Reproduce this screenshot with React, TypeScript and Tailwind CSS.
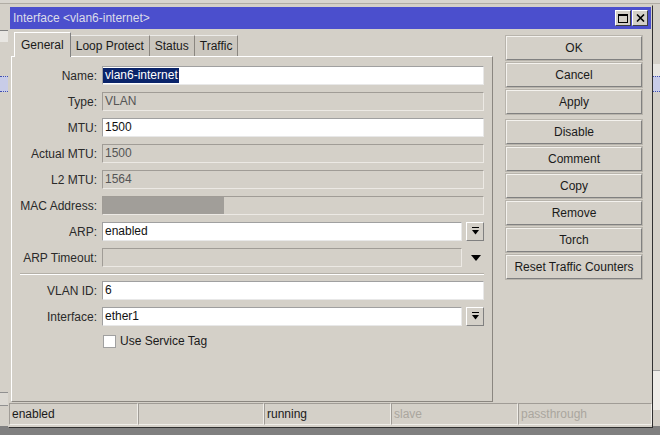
import React from 'react';

const font = { fontFamily: '"Liberation Sans", Arial, sans-serif' };

function DropButton() {
  return (
    <div className="w-[18px] h-[19px] ml-[4px] flex items-center justify-center bg-[#d4d0c8] border border-t-white border-l-white border-r-[#808080] border-b-[#808080]">
      <svg width="9" height="9" viewBox="0 0 9 9">
        <rect x="1" y="0" width="7" height="1" fill="#000" />
        <path d="M1 3h7L4.5 7.5z" fill="#000" />
      </svg>
    </div>
  );
}

function Field({
  label,
  value,
  editable,
  selected,
  drop,
  arrow,
  mac,
}: {
  label: string;
  value?: string;
  editable?: boolean;
  selected?: boolean;
  drop?: boolean;
  arrow?: boolean;
  mac?: boolean;
}) {
  return (
    <div className="flex items-center h-[19px]">
      <div className="w-[88px] text-right pr-[5px] text-[#2a2a2a] whitespace-nowrap">{label}:</div>
      <div
        className={
          'flex-1 h-[19px] flex items-center border ' +
          (editable
            ? 'bg-white border-t-[#a0a0a0] border-l-[#a0a0a0] border-r-[#e8e8e8] border-b-[#e8e8e8]'
            : 'bg-[#d4d0c8] border-t-[#a09c96] border-l-[#a09c96] border-r-[#ece9e4] border-b-[#ece9e4]')
        }
      >
        {mac ? (
          <div className="w-[121px] h-full bg-[#a19e99]" />
        ) : (
          <span
            className={
              'pl-[2px] leading-[15px] ' +
              (selected ? 'bg-[#0a246a] text-white pr-[1px]' : editable ? 'text-[#111]' : 'text-[#555]')
            }
          >
            {value}
          </span>
        )}
      </div>
      {drop && <DropButton />}
      {arrow && (
        <div className="w-[22px] flex justify-end pr-[3px]">
          <svg width="10" height="6" viewBox="0 0 10 6">
            <path d="M0 0h10L5 6z" fill="#000" />
          </svg>
        </div>
      )}
    </div>
  );
}

function Btn({ children }: { children: React.ReactNode }) {
  return (
    <div className="h-[24px] flex items-center justify-center bg-[#d4d0c8] border border-t-[#f4f2ee] border-l-[#f4f2ee] border-r-[#808080] border-b-[#808080] outline outline-1 outline-[#b8b4ac] text-[#1a1a1a]">
      {children}
    </div>
  );
}

function StatusCell({ text, dim, w }: { text?: string; dim?: boolean; w: string }) {
  return (
    <div
      className={
        w +
        ' h-[22px] flex items-center pl-[2px] border border-t-[#a09c96] border-l-[#a09c96] border-r-[#f0eee9] border-b-[#f0eee9] ' +
        (dim ? 'text-[#aaa69e]' : 'text-[#1a1a1a]')
      }
    >
      {text}
    </div>
  );
}

export default function App() {
  const tabs = ['General', 'Loop Protect', 'Status', 'Traffic'];
  return (
    <div className="relative w-[660px] h-[435px] bg-[#d4d0c8] overflow-hidden text-[12px]" style={font}>
      {/* desktop behind */}
      <div className="absolute left-0 top-0 w-[660px] h-[4px] bg-[#d8d5cf] border-b border-[#b0aca4]" />
      <div className="absolute left-0 top-[30px] w-[8px] h-[12px] border-t border-[#808080] bg-[#e8e6e2]" />
      <div className="absolute left-0 top-[76px] w-[8px] h-[16px] bg-[#c8cce8] border-y border-dotted border-[#4050b0]" />
      <div className="absolute right-0 top-[64px] w-[8px] h-[12px] bg-[#e8e6e2]" />
      <div className="absolute right-0 top-[76px] w-[8px] h-[16px] bg-[#c8cce8] border-y border-dotted border-[#4050b0]" />
      <div className="absolute right-0 top-[370px] w-[8px] h-[40px] bg-[#eeece8] border-t border-[#a0a0a0]" />
      <div className="absolute left-0 top-[392px] w-[8px] h-[14px] border-y border-[#909090] bg-[#dcd9d3]" />
      <div className="absolute left-0 top-[426px] w-[660px] h-[9px] bg-[#808080]" />

      {/* window */}
      <div className="absolute left-[8px] top-[5px] w-[645px] h-[423px] bg-[#d4d0c8] border border-t-[#d4d0c8] border-l-[#d4d0c8] border-r-[#303030] border-b-[#303030] flex flex-col">
        <div className="h-[22px] mx-[1px] mt-[1px] bg-[#4b4fcd] flex items-center justify-between pl-[3px] pr-[3px]">
          <span className="text-[#dcdcea]">Interface &lt;vlan6-internet&gt;</span>
          <div className="flex gap-[1px]">
            <div className="w-[16px] h-[16px] bg-[#d4d0c8] border border-t-white border-l-white border-r-[#404040] border-b-[#404040] flex items-center justify-center">
              <div className="w-[10px] h-[9px] border border-[#000] border-t-2" />
            </div>
            <div className="w-[16px] h-[16px] bg-[#d4d0c8] border border-t-white border-l-white border-r-[#404040] border-b-[#404040] flex items-center justify-center">
              <svg width="9" height="8" viewBox="0 0 9 8">
                <path d="M1 0.5l7 7M8 0.5l-7 7" stroke="#000" strokeWidth="1.6" />
              </svg>
            </div>
          </div>
        </div>

        <div className="flex flex-1 pl-[2px] pt-[3px]">
          {/* left: tabs + panel */}
          <div className="w-[482px] flex flex-col">
            <div className="flex items-end h-[24px] pl-[3px]">
              {tabs.map((t, i) =>
                i === 0 ? (
                  <div
                    key={t}
                    className="h-[25px] -mb-[1px] px-[6px] flex items-center bg-[#d4d0c8] border-t border-l border-white border-r border-r-[#808080] z-10 text-[#1a1a1a]"
                  >
                    {t}
                  </div>
                ) : (
                  <div
                    key={t}
                    className="h-[21px] px-[5px] flex items-center bg-[#cbc7bf] border-t border-t-[#ecebe8] border-r border-r-[#8a8680] text-[#1a1a1a]"
                  >
                    {t}
                  </div>
                )
              )}
            </div>
            <div className="h-[346px] border border-t-white border-l-white border-r-[#8a8680] border-b-[#8a8680] pt-[9px] pl-[2px] pr-[8px] flex flex-col gap-[7px]">
              <Field label="Name" value="vlan6-internet" editable selected />
              <Field label="Type" value="VLAN" />
              <Field label="MTU" value="1500" editable />
              <Field label="Actual MTU" value="1500" />
              <Field label="L2 MTU" value="1564" />
              <Field label="MAC Address" mac />
              <Field label="ARP" value="enabled" editable drop />
              <Field label="ARP Timeout" arrow />
              <div className="h-[1px] ml-[6px] -my-[1px] bg-[#b4b0a8] border-b border-white box-content" />
              <Field label="VLAN ID" value="6" editable />
              <Field label="Interface" value="ether1" editable drop />
              <div className="flex items-center h-[14px] mt-[1px] pl-[89px]">
                <div className="w-[13px] h-[13px] bg-white border border-[#a0a0a0]" />
                <span className="ml-[4px] text-[#1a1a1a]">Use Service Tag</span>
              </div>
            </div>
          </div>

          {/* right: buttons */}
          <div className="w-[136px] ml-[13px] pt-[4px] flex flex-col">
            <div className="flex flex-col gap-[3px]">
              <Btn>OK</Btn>
              <Btn>Cancel</Btn>
              <Btn>Apply</Btn>
            </div>
            <div className="flex flex-col gap-[3px] mt-[6px]">
              <Btn>Disable</Btn>
              <Btn>Comment</Btn>
              <Btn>Copy</Btn>
              <Btn>Remove</Btn>
              <Btn>Torch</Btn>
              <Btn>Reset Traffic Counters</Btn>
            </div>
          </div>
        </div>

        <div className="flex h-[24px] pb-[1px]">
          <StatusCell w="w-[129px]" text="enabled" />
          <StatusCell w="w-[126px]" />
          <StatusCell w="w-[127px]" text="running" />
          <StatusCell w="w-[127px]" text="slave" dim />
          <StatusCell w="w-[134px]" text="passthrough" dim />
        </div>
      </div>
    </div>
  );
}
